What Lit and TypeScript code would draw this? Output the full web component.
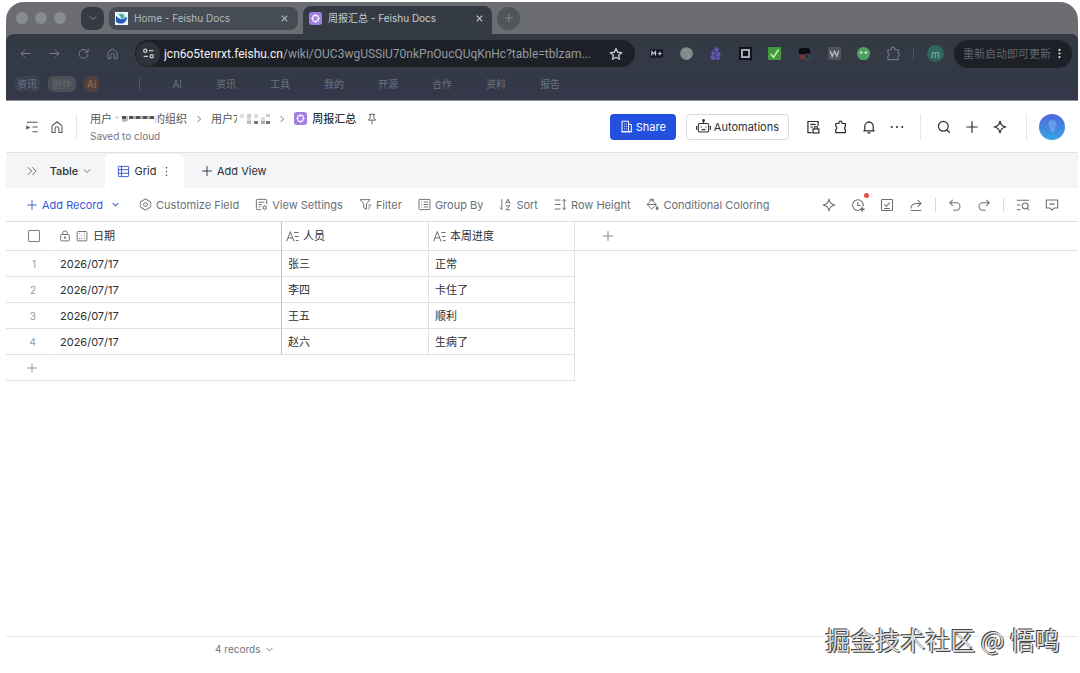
import { LitElement, html, css, svg, nothing } from "lit";
import { customElement, property, state } from "lit/decorators.js";

const ICONS: Record<string, unknown> = {
  back: svg`<path d="M14 8H2.5M7.5 3l-5 5 5 5"/>`,
  forward: svg`<path d="M2 8h11.5M8.5 3l5 5-5 5"/>`,
  reload: svg`<path d="M13.5 8.5A5.5 5.5 0 1 1 11.8 4.5L13.5 6M13.7 2v4.3H9.4"/>`,
  home: svg`<path d="M2.3 6.8 8 2l5.7 4.8v7.5h-3.5V10a2.2 2.2 0 0 0-4.4 0v4.3H2.3z" stroke-linejoin="round"/>`,
  down: svg`<path d="M3 5.5l5 5 5-5"/>`,
  right: svg`<path d="M5.5 3l5 5-5 5"/>`,
  close: svg`<path d="M3 3l10 10M13 3L3 13"/>`,
  plus: svg`<path d="M8 1.5v13M1.5 8h13"/>`,
  star: svg`<path d="M8 1.8l1.9 4.2 4.5.5-3.400 3 1 4.500L8 11.700 4 14l1-4.500-3.400-3 4.500-.5z" stroke-linejoin="round"/>`,
  tune: svg`<circle cx="4" cy="4.5" r="2"/><path d="M8.500 4.500H14M2 11.500h5.500"/><circle cx="12" cy="11.500" r="2"/>`,
  kebab: svg`<g fill="currentColor" stroke="none"><circle cx="8" cy="2.8" r="1.6"/><circle cx="8" cy="8" r="1.6"/><circle cx="8" cy="13.2" r="1.6"/></g>`,
  handle: svg`<g fill="currentColor" stroke="none"><circle cx="8" cy="2.5" r="1"/><circle cx="8" cy="8" r="1"/><circle cx="8" cy="13.5" r="1"/></g>`,
  dots: svg`<g fill="currentColor" stroke="none"><circle cx="2" cy="8" r="1.2"/><circle cx="8" cy="8" r="1.2"/><circle cx="14" cy="8" r="1.2"/></g>`,
  outline: svg`<path d="M2 2.500h12.500M8.500 8h6M8.500 13.500h6"/><path d="M1.500 6.300v4.900L6 8.700z" fill="currentColor" stroke="none"/>`,
  pin: svg`<path d="M4 1.8h8M5.500 1.800v5L3 9.500h10L10.500 6.800v-5M8 9.500V15"/>`,
  building: svg`<path d="M2.500 14.500v-13h8v13zM10.500 5.500h3.500v9h-3.500M1.500 14.500h13"/><path d="M5 5h1M7.500 5h1M5 8h1M7.500 8h1M5 11h1M7.500 11h1"/>`,
  robot: svg`<rect x="2.5" y="4.8" width="11" height="9" rx="1.5"/><path d="M8 4.800V1.500M.6 7.500v4M15.400 7.500v4M6 11.300h4"/><circle cx="8" cy="1.6" r=".9" fill="currentColor"/><path d="M5.500 8v1M10.500 8v1"/>`,
  doclock: svg`<path d="M6.500 14.300H2.200V1.700h11.600v5M5 5h6M5 8h3"/><rect x="8" y="10.3" width="6.7" height="4.5"/><path d="M9.600 10.300V9a1.700 1.700 0 0 1 3.500 0v1.300"/>`,
  puzzle: svg`<path d="M2 4h3.600V3.200a1.800 1.800 0 0 1 3.600 0V4h3.800v3.600a2 2 0 0 0 0 3.400v3.500H2v-3.600a2 2 0 0 0 0-3.700z" stroke-linejoin="round"/>`,
  bell: svg`<path d="M3.200 12V7.300a4.800 4.800 0 0 1 9.600 0V12M1.500 12.300h13M6.300 14.800h3.400M8 1v1.500"/>`,
  search: svg`<circle cx="7.2" cy="7.2" r="5.6"/><path d="M11.400 11.400l3.200 3.200"/>`,
  sparkle: svg`<path d="M8 1.300C8.600 5 10.500 7.300 14.700 8 10.500 8.700 8.600 11 8 14.700 7.400 11 5.500 8.700 1.300 8 5.500 7.300 7.400 5 8 1.300z" stroke-linejoin="round"/>`,
  expand: svg`<path d="M2.500 3l5 5-5 5M8.500 3l5 5-5 5"/>`,
  grid: svg`<rect x="1.7" y="1.7" width="12.6" height="12.6" rx="1"/><path d="M5.500 1.700v12.600M1.700 5.800h12.600M1.700 10.200h12.600"/>`,
  gear: svg`<path d="M6.200 1.500h3.600l1 2 2.300.1 1.700 3L13.600 8l1.200 1.400-1.700 3-2.300.1-1 2H6.200l-1-2-2.300-.1-1.700-3L2.400 8 1.200 6.600l1.700-3 2.300-.1z" stroke-linejoin="round"/><circle cx="8" cy="8" r="2.300"/>`,
  settings: svg`<path d="M7.500 14.300H2.700a1 1 0 0 1-1-1V2.700a1 1 0 0 1 1-1h10.600a1 1 0 0 1 1 1v5M4.500 5.200h7M4.500 8.200h4M4.500 11h2"/><circle cx="11.8" cy="11.9" r="2"/><path d="M11.800 8.900v1M11.800 13.900v1M9.200 10.400l.9.500M13.500 12.900l.9.500M14.400 10.400l-.9.500M10.100 12.900l-.9.500"/>`,
  filter: svg`<path d="M1.500 2h12l-4.300 5.200V14l-3.400-2V7.200zM11.500 8.500h3.500M11.500 11h2.500M11.500 13.500h1.500" stroke-linejoin="round"/>`,
  group: svg`<rect x="1.2" y="1.7" width="13.6" height="12.6" rx="1"/><path d="M4 5h1M7 5h5.500M4 8h1M7 8h5.500M4 11h1M7 11h5.500"/>`,
  sort: svg`<path d="M3.500 1.500v12.800L1 11.800M8 7l2.900-5.700L13.800 7M9 5.300h3.900M8.300 9.500h5.200l-5.200 5h5.500"/>`,
  height: svg`<path d="M1 2.500h7M1 8h7M1 13.500h7M12.500 1.700v12.600M10.500 4l2-2.300 2 2.300M10.500 12l2 2.300 2-2.300"/>`,
  bucket: svg`<path d="M7 2.200 12.700 8 7 13.700 1.300 8zM1.500 8h11M5 4V1.500h4V4" stroke-linejoin="round"/><path d="M13.700 10.300c2 2.700 1.200 4 0 4s-2-1.300 0-4z" fill="currentColor"/>`,
  clock: svg`<path d="M13.800 9.500A6.100 6.100 0 1 0 10 13.800M7.800 4.500v4h3"/><path d="M12.700 10.800l.7 1.500 1.500.6-1.500.6-.7 1.500-.7-1.500-1.500-.6 1.500-.6z" fill="currentColor"/>`,
  task: svg`<rect x="1.7" y="1.7" width="12.6" height="12.6" rx="1"/><path d="M5 7.200l2.300 2.300 4-4.300M4.500 12h7"/>`,
  share: svg`<path d="M9.800 2.500l4 3.700-4 3.700M13.800 6.200H9C5 6.200 2.500 8 2 12M2 14.300h12"/>`,
  undo: svg`<path d="M5.500 2 2 5.500 5.500 9M2 5.500h7.500a4.200 4.200 0 0 1 0 8.400H6"/>`,
  redo: svg`<path d="M10.500 2 14 5.500 10.500 9M14 5.500H6.500a4.200 4.200 0 0 0 0 8.400H10"/>`,
  find: svg`<path d="M1 2.500h14M1 8h4M1 13.500h4"/><circle cx="10.5" cy="9" r="3.3"/><path d="M13 11.500l2.300 2.500"/>`,
  comment: svg`<path d="M1.500 2.200h13v9.300h-4.300L8 13.800l-2.200-2.300H1.500zM5 7h6" stroke-linejoin="round"/>`,
  lock: svg`<rect x="2.2" y="6" width="11.6" height="8.500" rx="1"/><path d="M4.800 6V4.500a3.200 3.200 0 0 1 6.400 0V6M8 8.500v3.500M6.500 10.200h3"/>`,
  calendar: svg`<rect x="1.5" y="2" width="13" height="12.500" rx="1"/><path d="M4.500 5h1M10.500 5h1M7 8h1M10.500 8h1.200M4 11.300h1.200M7 11.300h1.200M10.500 11.300h1.200" stroke-width="1.500"/>`,
  text: svg`<path d="M.8 14 5.300 2l4.500 12M2.400 9.800h5.800M10 3h5.500M11 8h4.500M12 13h3.500"/>`,
};

@customElement("ui-icon")
export class UiIcon extends LitElement {
  @property() name = "";
  @property({ type: Number }) size = 14;
  @property({ type: Number }) weight = 1.2;

  static styles = css`
    :host {
      display: inline-flex;
      flex: none;
    }
    svg {
      display: block;
      fill: none;
      stroke: currentColor;
    }
  `;

  render() {
    return html`<svg viewBox="0 0 16 16" width=${this.size} height=${this.size} stroke-width=${this.weight} aria-hidden="true">
      ${ICONS[this.name] ?? nothing}
    </svg>`;
  }
}

const icon = (name: string, size = 14, weight = 1.2) =>
  html`<ui-icon name=${name} .size=${size} .weight=${weight}></ui-icon>`;

const baseLogo = (size: number) => html`<svg class="logo" viewBox="0 0 14 14" width=${size} height=${size} aria-hidden="true">
  <rect width="14" height="14" rx="3" fill="#a17fe2" />
  <rect x="4" y="4" width="6" height="6" rx="2" fill="none" stroke="#fff" stroke-width="1.3" />
  <path d="M7 2.500v1.800M7 9.700v1.800M2.500 7h1.800M9.700 7h1.800" stroke="#fff" stroke-width="1.3" />
</svg>`;

const EXTENSIONS = [
  { label: "Markdown", art: svg`<rect x="1" y="3.5" width="14" height="9" fill="#151724"/><path d="M3 10V6l2 2.300L7 6v4M9.500 8h4M11.500 6v4" stroke="#c9ccd2" stroke-width="1.2" fill="none"/>` },
  { label: "Sphere", art: svg`<circle cx="8" cy="8" r="6.800" fill="#7f8b89"/><path d="M5 3c3 2 1 4 4 5s1 4-1 6" stroke="#98a39e" fill="none"/>` },
  { label: "Knot", art: svg`<g fill="#6357ae"><circle cx="9" cy="4" r="2.600"/><circle cx="6" cy="7" r="2.600"/><circle cx="10.500" cy="9" r="2.800"/><circle cx="5.500" cy="12" r="2.800"/><circle cx="10.500" cy="13" r="2"/></g><path d="M5 5l5 2-4 3 5 2" stroke="#363d66" fill="none"/>` },
  { label: "Frame", art: svg`<rect x="1" y="1" width="14" height="14" fill="#0f131d"/><rect x="4.2" y="4.2" width="7.6" height="7.6" fill="none" stroke="#bfc2c9" stroke-width="1.8"/>` },
  { label: "Check", art: svg`<rect x="1" y="1" width="14" height="14" rx="1.5" fill="#439b3d"/><path d="M4 8.500l3 3.500 5.500-8.500" fill="none" stroke="#d4ebc7" stroke-width="1.5"/>` },
  { label: "Mask", art: svg`<path d="M3.500 2h9L14 4v5H2V4z" fill="#0b0d14"/><path d="M2 9h6v5H3z" fill="#70323d"/><circle cx="11" cy="11.500" r="2.800" fill="#252a33" stroke="#5c6068"/>` },
  { label: "Word", art: svg`<rect x="1" y="1" width="14" height="14" rx="1" fill="#50545b"/><path d="M3.500 5l2 6L8 5.500 10.500 11l2-6" fill="none" stroke="#bfc2c6" stroke-width="1.3"/>` },
  { label: "Ghost", art: svg`<circle cx="8" cy="8" r="7" fill="#519f60"/><circle cx="5.5" cy="7" r="1.5" fill="#c5e0c9"/><circle cx="10.5" cy="7" r="1.5" fill="#c5e0c9"/>` },
  { label: "Extensions", art: svg`<path d="M2 4h3.600V3a1.800 1.800 0 0 1 3.600 0v1h3.800v3.600a1.800 1.800 0 0 1 0 3.400v3.500H2v-3.600a2 2 0 0 0 0-3.700z" fill="none" stroke="#727780" stroke-width="1.2"/>` },
];

@customElement("browser-chrome")
export class BrowserChrome extends LitElement {
  static styles = css`
    :host {
      display: block;
      font-family: Inter, "Noto Sans CJK SC", sans-serif;
      color: #b4bac3;
    }
    * { box-sizing: border-box; }
    button {
      display: inline-flex;
      align-items: center;
      justify-content: center;
      flex: none;
      border: 0;
      padding: 0;
      background: none;
      color: inherit;
      font: inherit;
    }
    .frame {
      border-radius: 18px 18px 0 0;
      overflow: hidden;
      background: #6b6d72;
      border-bottom: 1px solid #8d9098;
    }
    .strip {
      display: flex;
      align-items: center;
      height: 32px;
    }
    .lights {
      display: flex;
      gap: 7px;
      padding: 0 15px 0 10px;
    }
    .light {
      width: 12px;
      height: 12px;
      border-radius: 50%;
      background: #898c8e;
    }
    .menu {
      width: 23px;
      height: 23px;
      border-radius: 8px;
      background: #353b44;
      color: #858c94;
    }
    .tab {
      display: flex;
      align-items: center;
      gap: 6px;
      width: 189px;
      height: 23px;
      margin: 0 5px;
      padding: 0 9px 0 6px;
      border-radius: 8px;
      background: #454c54;
      font-size: 10px;
    }
    .tab.active {
      height: 28px;
      margin: 0 5px 0 0;
      padding: 0 8px 4px 6px;
      align-self: flex-end;
      border-radius: 8px 8px 0 0;
      background: #353b44;
      color: #c8cdd3;
    }
    .title { flex: 1; white-space: nowrap; overflow: hidden; }
    .add {
      width: 23px;
      height: 23px;
      border-radius: 50%;
      background: #50555b;
      color: #858a90;
    }
    .body {
      border-radius: 8px 6px 0 0;
      background: linear-gradient(#333a43, #34384a);
    }
    .bar {
      display: flex;
      align-items: center;
      height: 39px;
      padding: 0 6px 0 13px;
      color: #7a8089;
    }
    .nav { display: flex; gap: 16px; margin-right: 16px; }
    .address {
      display: flex;
      flex: 1;
      align-items: center;
      gap: 4px;
      min-width: 0;
      height: 27px;
      padding: 0 12px 0 1px;
      border-radius: 14px;
      background: #1d2026;
      color: #c6cad0;
    }
    .site {
      width: 24px;
      height: 24px;
      border-radius: 50%;
      background: #30343a;
    }
    .url {
      flex: 1;
      overflow: hidden;
      white-space: nowrap;
      color: #969aa1;
      font-family: Roboto, Inter, sans-serif;
      font-size: 12px;
      text-decoration: none;
    }
    .host { color: #f1f3f5; }
    .extensions {
      display: grid;
      flex: none;
      grid-template-columns: repeat(9, 1fr);
      width: 266px;
      margin: 0 5px 0 7px;
    }
    .rule { width: 1px; height: 12px; background: #50565f; }
    .profile {
      width: 17px;
      height: 17px;
      margin: 0 10px 0 13px;
      border-radius: 50%;
      background: #2f675f;
      color: #90b5ad;
      font-size: 10px;
    }
    .update {
      gap: 3px;
      height: 28px;
      padding: 0 7px 0 9px;
      border-radius: 14px;
      background: #1d2026;
      color: #62666d;
      font-size: 11px;
    }
    .update ui-icon { color: #e0e2e5; }
    .bookmarks {
      display: flex;
      align-items: center;
      height: 27px;
      padding: 0 8px 6px;
      font-size: 10px;
      line-height: 16px;
      color: #6d737d;
    }
    .bookmarks a { color: inherit; text-decoration: none; }
    .chip { margin-right: 8px; padding: 0 3px; border-radius: 5px; background: #3b4051; }
    .chip.grey { padding: 0 4px; background: #4c5056; color: #686c70; }
    .chip.rust { background: #51403d; color: #a36c4c; }
    .bookmarks .rule { margin: 0 32px; }
    .links { display: flex; gap: 34px; }
  `;

  render() {
    return html`<header class="frame">
      <div class="strip">
        <div class="lights"><span class="light"></span><span class="light"></span><span class="light"></span></div>
        <button class="menu" aria-label="Search tabs">${icon("down", 10, 1.6)}</button>
        <div class="tab">
          <svg viewBox="0 0 14 14" width="13" height="13" aria-hidden="true">
            <rect width="14" height="14" fill="#eef4fc" />
            <path d="M3 2h5c2 1 2.500 3 2.500 4L7 8C6 5 5 3.500 3 2z" fill="#48b6ac" />
            <path d="M1 4c3 3 5 4.500 8 3.500L13 5c-.5 5-3 7.500-7 7.500-2.500 0-4-1-5-2z" fill="#275ab8" />
          </svg>
          <span class="title">Home - Feishu Docs</span>
          <button aria-label="Close tab">${icon("close", 9, 2)}</button>
        </div>
        <div class="tab active">
          ${baseLogo(13)}
          <span class="title">周报汇总 - Feishu Docs</span>
          <button aria-label="Close tab">${icon("close", 9, 2)}</button>
        </div>
        <button class="add" aria-label="New tab">${icon("plus", 10, 1.5)}</button>
      </div>
      <div class="body">
        <div class="bar">
          <nav class="nav">
            <button aria-label="Back">${icon("back", 13)}</button>
            <button aria-label="Forward">${icon("forward", 13)}</button>
            <button aria-label="Reload">${icon("reload", 13)}</button>
            <button aria-label="Home">${icon("home", 13)}</button>
          </nav>
          <div class="address">
            <button class="site" aria-label="Site information">${icon("tune", 13, 1.6)}</button>
            <a class="url" href="#"><span class="host">jcn6o5tenrxt.feishu.cn</span>/wiki/OUC3wgUSSiU70nkPnOucQUqKnHc?table=tblzam...</a>
            <button aria-label="Bookmark">${icon("star", 14, 1.5)}</button>
          </div>
          <div class="extensions">
            ${EXTENSIONS.map((e) => html`<button aria-label=${e.label}><svg viewBox="0 0 16 16" width="15" height="15">${e.art}</svg></button>`)}
          </div>
          <span class="rule"></span>
          <button class="profile">m</button>
          <button class="update">重新启动即可更新 ${icon("kebab", 11)}</button>
        </div>
        <nav class="bookmarks">
          <a class="chip" href="#">资讯</a><a class="chip grey" href="#">创作</a><a class="chip rust" href="#">Ai</a>
          <span class="rule"></span>
          <div class="links">
            ${["AI", "资讯", "工具", "我的", "开源", "合作", "资料", "报告"].map((t) => html`<a href="#">${t}</a>`)}
          </div>
        </nav>
      </div>
    </header>`;
  }
}

interface Row {
  date: string;
  person: string;
  progress: string;
}

@customElement("app-root")
export class AppRoot extends LitElement {
  @state() private rows: Row[] = [
    { date: "2026/07/17", person: "张三", progress: "正常" },
    { date: "2026/07/17", person: "李四", progress: "卡住了" },
    { date: "2026/07/17", person: "王五", progress: "顺利" },
    { date: "2026/07/17", person: "赵六", progress: "生病了" },
  ];

  static styles = css`
    :host {
      display: flex;
      flex-direction: column;
      min-height: 100vh;
      box-sizing: border-box;
      padding: 2px 2px 0 6px;
      background: #fff;
      color: #2b2f36;
      font-family: Inter, "Noto Sans CJK SC", sans-serif;
      font-size: 11px;
      line-height: 16px;
    }
    * { box-sizing: border-box; }
    button {
      display: inline-flex;
      align-items: center;
      justify-content: center;
      flex: none;
      border: 0;
      padding: 0;
      background: none;
      color: inherit;
      font: inherit;
    }
    a { color: inherit; text-decoration: none; }
    .top {
      display: flex;
      align-items: center;
      height: 52px;
      padding: 0 13px 0 19px;
      border-bottom: 1px solid #dfe1e4;
    }
    .left { display: flex; gap: 11px; color: #50555c; }
    .split { width: 1px; height: 26px; background: #e4e6e9; }
    .left + .split { margin: 0 13px 0 12px; }
    .where { flex: 1; }
    .crumbs {
      display: flex;
      align-items: center;
      height: 18px;
      color: #50555c;
      white-space: nowrap;
    }
    .crumbs a { display: flex; align-items: center; }
    .crumbs > ui-icon { margin: 0 7px; }
    .mosaic { display: block; flex: none; z-index: 1; }
    .cut { margin-left: -4px; }
    .mosaic.cut { margin-left: -6px; }
    .current { gap: 5px; color: #2b2f36; font-weight: 500; }
    .crumbs .logo { display: block; }
    .crumbs .tack { margin-left: 10px; }
    .saved { font-size: 10px; color: #73787f; }
    .primary,
    .secondary {
      gap: 3px;
      height: 26px;
      margin-right: 10px;
      padding: 0 10px;
      border-radius: 4px;
      background: #2450e0;
      color: #fff;
    }
    .secondary {
      margin-right: 17px;
      padding: 0 9px;
      border: 1px solid #d6d9dd;
      background: #fff;
      color: #2b2f36;
    }
    .actions { display: flex; gap: 14px; }
    .top .actions + .split { margin: 0 16px; }
    .top .actions.end + .split { margin: 0 12px 0 19px; }
    .views {
      display: flex;
      align-items: center;
      height: 35px;
      background: #f3f5f7;
    }
    .tables {
      gap: 4px;
      align-self: stretch;
      width: 99px;
      padding-left: 7px;
      font-weight: 500;
    }
    .tables span { margin-left: 8px; }
    .tables ui-icon { color: #5c6168; }
    .view {
      gap: 5px;
      align-self: flex-end;
      width: 79px;
      height: 34px;
      border-radius: 6px 6px 0 0;
      background: #fff;
    }
    .view .blue, .record { color: #3859d6; }
    .newview { gap: 4px; margin-left: 17px; }
    .tools {
      display: flex;
      align-items: center;
      gap: 16px;
      height: 34px;
      padding: 0 19px 0 20px;
      border-bottom: 1px solid #dcdee1;
      color: #6a6f76;
      white-space: nowrap;
    }
    .tools button { gap: 4px; }
    .tools .record { margin-right: 3px; }
    .record ui-icon:last-child { margin-left: 4px; }
    .right {
      display: flex;
      align-items: center;
      gap: 12px;
      margin-left: auto;
    }
    .right button + button { margin-left: 3px; }
    .right .split { height: 14px; background: #d6d9dd; }
    .alert { position: relative; }
    .alert::after {
      content: "";
      position: absolute;
      top: -5px;
      right: -4px;
      width: 5px;
      height: 5px;
      border-radius: 50%;
      background: #e0524a;
    }
    table {
      width: 100%;
      table-layout: fixed;
      border-collapse: separate;
      border-spacing: 0;
    }
    th, td {
      height: 26px;
      padding: 0 6px;
      border-bottom: 1px solid #dfe1e4;
      border-right: 1px solid #e1e3e6;
      text-align: left;
      font-weight: 400;
    }
    th { height: 29px; padding: 0 4px; }
    th:last-child, td:last-child { border-right: 0; }
    td:last-child { border-bottom: 0; }
    .select { width: 49px; border-right-color: transparent; }
    .date { width: 227px; border-right-color: #bfc2c6; }
    td.date { padding-left: 5px; }
    .field { width: 147px; }
    .field.last { width: 146px; }
    .head { display: flex; align-items: center; gap: 4px; color: #2b2f36; }
    .head ui-icon { color: #62676e; }
    .head ui-icon + ui-icon { margin: 0 1px; }
    td.select { padding: 0 18px 0 0; text-align: right; font-size: 10px; color: #969aa0; }
    th.select { padding-left: 22px; }
    .box {
      display: block;
      appearance: none;
      width: 12px;
      height: 12px;
      margin: 0;
      border: 1px solid #7c8188;
      border-radius: 1px;
      background: #fff;
    }
    th.extra { padding-left: 27px; color: #777c83; }
    .more { padding-left: 20px; color: #8b8f95; }
    th button, td button { display: flex; }
    .foot {
      display: flex;
      height: 37px;
      margin-top: auto;
      padding: 4px 0 0 209px;
      border-top: 1px solid #e6e8ea;
      color: #6f747b;
      font-size: 10px;
    }
    .foot button { gap: 5px; height: 16px; }
    .watermark {
      position: absolute;
      right: 20px;
      bottom: 16px;
      color: #dcdcdc;
      font-family: "Noto Sans CJK SC", sans-serif;
      font-size: 25px;
      line-height: 36px;
      text-shadow: -1px -1px 0 #444, 1px 1px 0 #444;
    }
  `;

  private header() {
    return html`<div class="top">
      <div class="left">
        <button aria-label="Outline">${icon("outline")}</button>
        <button aria-label="Home">${icon("home")}</button>
      </div>
      <span class="split"></span>
      <div class="where">
        <nav class="crumbs">
          <a href="#">用户
            <svg class="mosaic" viewBox="0 0 46 12" width="46" height="12" aria-hidden="true">
              <path d="M42 0h4v12h-4z" fill="#fff" />
              <path d="M3 3h4v3H3z" fill="#e4e4e4" /><path d="M10 3h4v3h-4z" fill="#555" />
              <path d="M10 6h4v3h-4zM14 3h2v5h-2z" fill="#bbb" />
              <path d="M17 3h4v3h-4zM24 3h4v3h-4zM31 3h4v3h-4zM38 3h4v3h-4z" fill="#555" />
              <path d="M21 3h3v3h-3zM28 3h3v3h-3zM35 3h3v3h-3z" fill="#aaa" />
              <path d="M42 3h4v7h-4z" fill="#e8e8e8" />
            </svg><span class="cut">的组织</span></a>
          ${icon("right", 10, 1.3)}
          <a href="#">用户7
            <svg class="mosaic cut" viewBox="4 0 37 12" width="37" height="12" aria-hidden="true">
              <path d="M8 0h33v12H8z" fill="#fff" />
              <path d="M11 1h4v4h-4zM18 4h4v4h-4zM25 1h4v4h-4zM32 4h4v4h-4z" fill="#ddd" />
              <path d="M18 1h4v3h-4zM37 1h4v3h-4z" fill="#ccc" />
              <path d="M18 8h4v3h-4z" fill="#bbb" />
              <path d="M25 8h4v3h-4zM37 8h4v3h-4z" fill="#777" /><path d="M32 8h4v3h-4z" fill="#aaa" />
            </svg></a>
          ${icon("right", 10, 1.3)}
          <a class="current" href="#">${baseLogo(13)}周报汇总</a>
          <button class="tack" aria-label="Pin">${icon("pin", 12)}</button>
        </nav>
        <div class="saved">Saved to cloud</div>
      </div>
      <button class="primary">${icon("building", 13)}Share</button>
      <button class="secondary">${icon("robot", 15)}Automations</button>
      <div class="actions">
        <button aria-label="Permissions">${icon("doclock", 14, 1.4)}</button>
        <button aria-label="Plugins">${icon("puzzle", 14, 1.4)}</button>
        <button aria-label="Notifications">${icon("bell", 14, 1.4)}</button>
        <button aria-label="More">${icon("dots")}</button>
      </div>
      <span class="split"></span>
      <div class="actions end">
        <button aria-label="Search">${icon("search", 14, 1.4)}</button>
        <button aria-label="Create">${icon("plus", 14, 1.4)}</button>
        <button aria-label="Assistant">${icon("sparkle", 14, 1.4)}</button>
      </div>
      <span class="split"></span>
      <button aria-label="Account">
        <svg viewBox="0 0 26 26" width="26" height="26">
          <defs><linearGradient id="sky" x1="0" y1="0" x2="0" y2="1"><stop offset="0" stop-color="#5068da" /><stop offset="1" stop-color="#36a4e4" /></linearGradient></defs>
          <circle cx="13" cy="13" r="13" fill="url(#sky)" />
          <path d="M13 6c4 0 5 3 4 6-1 2-1 4-2 6h-3c0-3-2-5-3-8 0-2 2-4 4-4z" fill="#73a8f5" opacity=".7" />
        </svg>
      </button>
    </div>`;
  }

  render() {
    return html`
      <browser-chrome></browser-chrome>
      ${this.header()}
      <div class="views">
        <button class="tables">${icon("expand", 12)}<span>Table</span>${icon("down", 10, 1.4)}</button>
        <button class="view"><ui-icon class="blue" name="grid" .size=${13}></ui-icon>Grid${icon("handle", 11)}</button>
        <button class="newview">${icon("plus", 12)}Add View</button>
      </div>
      <div class="tools">
        <button class="record">${icon("plus", 12)}Add Record${icon("down", 9, 1.8)}</button>
        <button>${icon("gear", 13)}Customize Field</button>
        <button>${icon("settings", 13)}View Settings</button>
        <button>${icon("filter", 13)}Filter</button>
        <button>${icon("group", 13)}Group By</button>
        <button>${icon("sort", 13)}Sort</button>
        <button>${icon("height", 13)}Row Height</button>
        <button>${icon("bucket", 13)}Conditional Coloring</button>
        <div class="right">
          <button aria-label="AI">${icon("sparkle")}</button>
          <button class="alert" aria-label="History">${icon("clock")}</button>
          <button aria-label="Tasks">${icon("task")}</button>
          <button aria-label="Share view">${icon("share")}</button>
          <span class="split"></span>
          <button aria-label="Undo">${icon("undo")}</button>
          <button aria-label="Redo">${icon("redo")}</button>
          <span class="split"></span>
          <button aria-label="Find">${icon("find")}</button>
          <button aria-label="Comment">${icon("comment")}</button>
        </div>
      </div>
      <table>
        <thead>
          <tr>
            <th class="select"><input class="box" type="checkbox" aria-label="Select all records" /></th>
            <th class="date"><div class="head">${icon("lock", 12)}${icon("calendar", 12)}日期</div></th>
            <th class="field"><div class="head">${icon("text", 13)}人员</div></th>
            <th class="field last"><div class="head">${icon("text", 13)}本周进度</div></th>
            <th class="extra"><button aria-label="Add field">${icon("plus", 12)}</button></th>
          </tr>
        </thead>
        <tbody>
          ${this.rows.map(
            (r, i) => html`<tr>
              <td class="select">${i + 1}</td>
              <td class="date">${r.date}</td>
              <td>${r.person}</td>
              <td>${r.progress}</td>
              <td></td>
            </tr>`,
          )}
          <tr>
            <td class="more" colspan="4"><button aria-label="Add record">${icon("plus", 12)}</button></td>
            <td></td>
          </tr>
        </tbody>
      </table>
      <footer class="foot"><button>${this.rows.length} records ${icon("down", 9, 1.6)}</button></footer>
      <div class="watermark">掘金技术社区 @ 悟鸣</div>
    `;
  }
}
